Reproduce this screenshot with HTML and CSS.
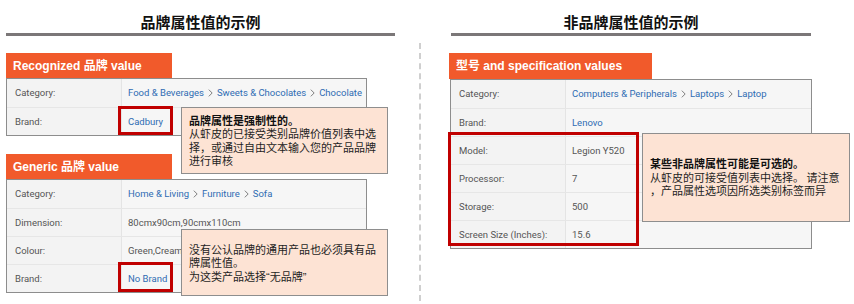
FILE: index.html
```html
<!Doctype html>
<html>
	<head>
		<title>品牌属性值的示例</title>
		<meta charset="utf-8">
		<link rel="stylesheet" href="styles.css">
	</head>
	<body>
		<div class="sheet">
			<div class="panel left">
				<h2 class="title">品牌属性值的示例</h2>

				<div class="tag">Recognized 品牌 value</div>
				<div class="attrs">
					<div class="row">
						<div class="key">Category:</div>
						<div class="val link">Food &amp; Beverages<svg class="chev" viewBox="0 0 6 10"><polyline points="1,1 5,5 1,9"/></svg>Sweets &amp; Chocolates<svg class="chev" viewBox="0 0 6 10"><polyline points="1,1 5,5 1,9"/></svg>Chocolate</div>
					</div>
					<div class="row">
						<div class="key">Brand:</div>
						<div class="val link">Cadbury</div>
					</div>
				</div>

				<div class="tag second">Generic 品牌 value</div>
				<div class="attrs">
					<div class="row">
						<div class="key">Category:</div>
						<div class="val link">Home &amp; Living<svg class="chev" viewBox="0 0 6 10"><polyline points="1,1 5,5 1,9"/></svg>Furniture<svg class="chev" viewBox="0 0 6 10"><polyline points="1,1 5,5 1,9"/></svg>Sofa</div>
					</div>
					<div class="row">
						<div class="key">Dimension:</div>
						<div class="val">80cmx90cm,90cmx110cm</div>
					</div>
					<div class="row">
						<div class="key">Colour:</div>
						<div class="val">Green,Cream,Grey</div>
					</div>
					<div class="row">
						<div class="key">Brand:</div>
						<div class="val link">No Brand</div>
					</div>
				</div>

				<div class="mark m-cadbury"></div>
				<div class="mark m-nobrand"></div>

				<div class="note n-mandatory">
					<div><b>品牌属性是强制性的。</b><br>从虾皮的已接受类别品牌价值列表中选<br>择，或通过自由文本输入您的产品品牌<br>进行审核</div>
				</div>
				<div class="note n-generic">
					<div>没有公认品牌的通用产品也必须具有品<br>牌属性值。<br>为这类产品选择<span class="q">“</span>无品牌<span class="q">”</span></div>
				</div>
			</div>

			<div class="divider"></div>

			<div class="panel right">
				<h2 class="title">非品牌属性值的示例</h2>

				<div class="tag wide">型号 and specification values</div>
				<div class="attrs">
					<div class="row">
						<div class="key">Category:</div>
						<div class="val link">Computers &amp; Peripherals<svg class="chev" viewBox="0 0 6 10"><polyline points="1,1 5,5 1,9"/></svg>Laptops<svg class="chev" viewBox="0 0 6 10"><polyline points="1,1 5,5 1,9"/></svg>Laptop</div>
					</div>
					<div class="row">
						<div class="key">Brand:</div>
						<div class="val link">Lenovo</div>
					</div>
					<div class="row">
						<div class="key">Model:</div>
						<div class="val">Legion Y520</div>
					</div>
					<div class="row">
						<div class="key">Processor:</div>
						<div class="val">7</div>
					</div>
					<div class="row">
						<div class="key">Storage:</div>
						<div class="val">500</div>
					</div>
					<div class="row">
						<div class="key">Screen Size (Inches):</div>
						<div class="val">15.6</div>
					</div>
				</div>

				<div class="mark m-specs"></div>

				<div class="note n-optional">
					<div><b>某些非品牌属性可能是可选的。</b><br>从虾皮的可接受值列表中选择。 请注意<br>，产品属性选项因所选类别标签而异</div>
				</div>
			</div>
		</div>
	</body>
</html>
```

FILE: styles.css
```css
* {box-sizing: border-box}
html, body { margin:0; background:#fff; }
body { width:854px; height:304px; overflow:hidden; font-family:"Noto Sans CJK SC", sans-serif; }

.sheet { display:flex; align-items:flex-start; }

.panel { position:relative; }
.panel.left { margin-left:6px; width:389px; }
.panel.right { margin-left:28px; width:362px; }

.divider {
	width:2px;
	height:258px;
	margin:43px 0 0 24px;
	border-left:2px dashed #cfcfcf;
}

.title {
	margin:0;
	padding:12px 0 2px 0;
	font-size:15px;
	line-height:19px;
	font-weight:bold;
	color:#111;
	text-align:center;
	border-bottom:3px solid #7b7778;
}
.right .title { margin-left:2px; }

.tag {
	width:166px;
	height:25px;
	margin-top:17px;
	padding:6px 0 0 7px;
	background:#f15a2b;
	color:#fff;
	font-family:"Liberation Sans", "Noto Sans CJK SC", sans-serif;
	font-size:12px;
	font-weight:bold;
	line-height:15px;
}
.tag.second { margin-top:18px; }
.tag.wide { width:203px; height:26px; }

.attrs {
	width:361px;
	border:1px solid #8d8d8d;
	background:#f6f6f6;
	font-family:Roboto, "Liberation Sans", sans-serif;
	font-size:9.5px;
}
.right .attrs { margin-left:1px; width:362px; }

.row { display:flex; height:28px; border-top:1px solid #e6e6e6; }
.row:first-child { border-top:none; }

.key {
	flex:none;
	width:115px;
	padding:0 0 1px 8px;
	display:flex;
	align-items:center;
	color:#555;
	border-right:1px solid #e4e4e4;
	background:#f3f3f3;
}
.val {
	flex:1;
	min-width:0;
	padding:0 0 1px 6px;
	display:flex;
	align-items:center;
	color:#555;
	white-space:nowrap;
}
.val.link { color:#2f6cb3; }

.chev {
	flex:none;
	width:5px;
	height:10px;
	margin:0 4px;
	fill:none;
	stroke:#666;
	stroke-width:1;
}

.mark {
	position:absolute;
	border:3px solid #c00000;
}
.m-cadbury { left:112px; top:106px; width:55px; height:29px; }
.m-nobrand { left:112px; top:262px; width:55px; height:30px; }
.m-specs { left:-1px; top:132px; width:191px; height:114px; }

.note {
	position:absolute;
	display:flex;
	align-items:center;
	padding:0 4px 0 7px;
	background:#fde3d4;
	border:1.5px solid #8e8e8e;
	color:#1e1e1e;
	font-size:11px;
	line-height:13.5px;
	white-space:nowrap;
}
.note b { font-weight:bold; color:#111; }
.note .q { font-family:"Liberation Sans", sans-serif; }
.n-mandatory { left:175px; top:107px; width:207px; height:67px; }
.n-generic { left:175px; top:229px; width:207px; height:67px; padding-top:2px; }
.n-optional { left:193px; top:133px; width:208px; height:89px; }
```
